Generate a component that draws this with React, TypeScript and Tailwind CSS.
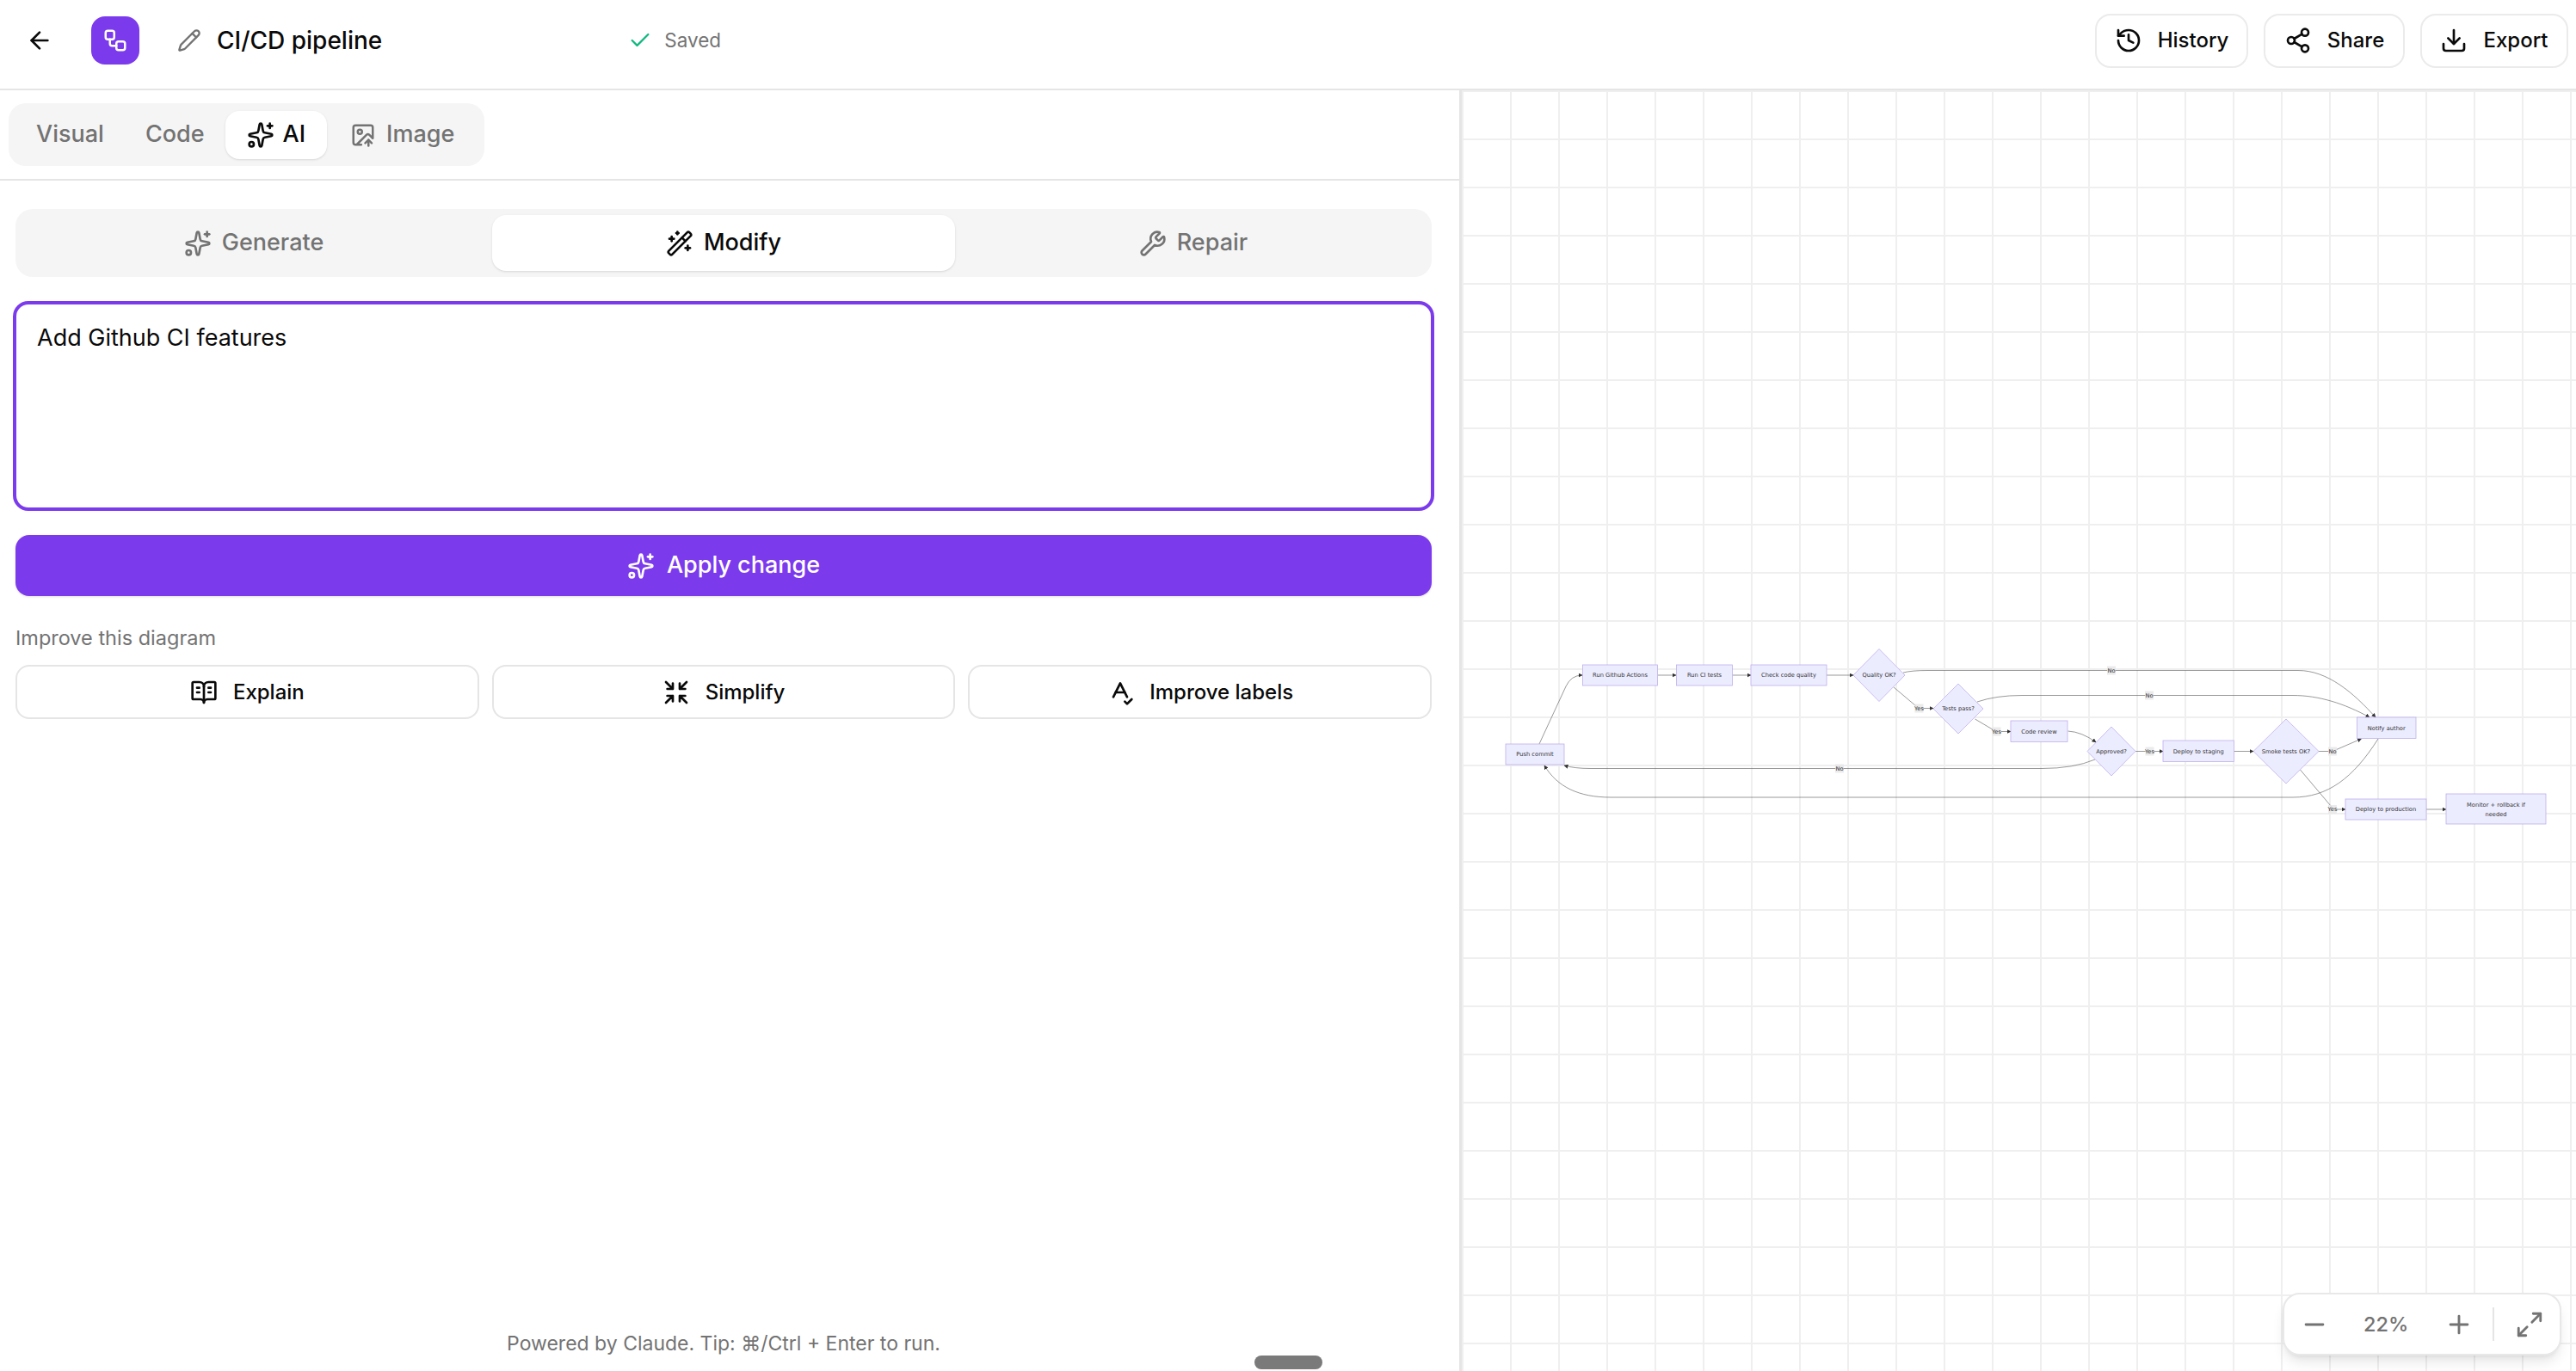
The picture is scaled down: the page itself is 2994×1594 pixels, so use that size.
import React from 'react';
import {
    ArrowLeft,
    BookOpenText,
    Check,
    Download,
    History,
    ImageUp,
    Maximize2,
    Minus,
    Pencil,
    Plus,
    Share2,
    Shrink,
    Sparkles,
    SpellCheck,
    WandSparkles,
    Workflow,
    Wrench,
} from 'lucide-react';

const font = { fontFamily: 'Inter, sans-serif' };

const boxes = [
    { x: 1750, y: 865, w: 68, h: 24, label: 'Push commit' },
    { x: 1839.5, y: 773, w: 87, h: 24, label: 'Run Github Actions' },
    { x: 1948.5, y: 773, w: 65, h: 24, label: 'Run CI tests' },
    { x: 2035, y: 773, w: 88, h: 24, label: 'Check code quality' },
    { x: 2337, y: 838, w: 66, h: 24.5, label: 'Code review' },
    { x: 2514, y: 861, w: 82.5, h: 24.5, label: 'Deploy to staging' },
    { x: 2739.5, y: 834, w: 68.5, h: 24.5, label: 'Notify author' },
    { x: 2726, y: 929, w: 94, h: 24, label: 'Deploy to production' },
];

const diamonds = [
    { cx: 2184, cy: 785, rx: 30, ry: 30.5, label: 'Quality OK?' },
    { cx: 2276, cy: 824, rx: 29, ry: 29, label: 'Tests pass?' },
    { cx: 2454, cy: 873.5, rx: 28, ry: 28.5, label: 'Approved?' },
    { cx: 2657, cy: 873.5, rx: 38, ry: 37.5, label: 'Smoke tests OK?' },
];

const edges = [
    'M1789 865 L1820 798 Q1826 785 1839 785',
    'M1926.5 785 L1948 785',
    'M2013.5 785 L2035 785',
    'M2123 785 L2154 785',
    'M2212 782 Q2222 779.5 2240 779.5 L2671 779.5 C2705 779.5 2735 805 2761 834',
    'M2298 816 Q2320 808.5 2350 808.5 L2665 808.5 C2695 808.5 2725 818 2754 834',
    'M2201 799 L2230 823.5 L2247 823.5',
    'M2295.5 836 L2320 850.5 L2337 850.5',
    'M2403.5 850 Q2420 851 2436 863',
    'M2435 883 Q2410 893.5 2373 893.5 L1849 893.5 Q1830 893.5 1818 890',
    'M2482 873.5 L2514 873.5',
    'M2596.5 873.5 L2619 873.5',
    'M2695 873.5 L2711 873.5 L2744.5 859',
    'M2673.5 895 L2709 937 L2714 941 L2726 941',
    'M2820 941 L2843 941',
    'M2764 859 C2735 905 2705 927 2665 927 L1872 927 C1835 927 1810 915 1795 890',
];

const edgeLabels = [
    { x: 2454, y: 779.5, label: 'No' },
    { x: 2498, y: 808.5, label: 'No' },
    { x: 2138, y: 893.5, label: 'No' },
    { x: 2230.5, y: 823.5, label: 'Yes' },
    { x: 2320.5, y: 850.5, label: 'Yes' },
    { x: 2498.5, y: 873.5, label: 'Yes' },
    { x: 2711, y: 873.5, label: 'No' },
    { x: 2711, y: 941, label: 'Yes' },
];

function Diagram() {
    const text = { fontFamily: '"DejaVu Sans", sans-serif', fontSize: 6.7, fill: '#333' };
    return (
        <svg className="absolute inset-0 h-full w-full" viewBox="1699 105 1295 1489" preserveAspectRatio="xMinYMin slice">
            <defs>
                <marker id="head" markerUnits="userSpaceOnUse" markerWidth="5" markerHeight="5" refX="4.5" refY="2.5" orient="auto">
                    <path d="M0 0 L5 2.5 L0 5 z" fill="#333" />
                </marker>
            </defs>
            {edges.map((d) => (
                <path key={d} d={d} fill="none" stroke="#555" strokeWidth="0.6" markerEnd="url(#head)" />
            ))}
            {edgeLabels.map((l) => (
                <g key={`${l.x}-${l.y}`}>
                    <rect x={l.x - 5} y={l.y - 5} width="10" height="10" fill="#e8e8e8" fillOpacity="0.85" />
                    <text x={l.x} y={l.y + 2.4} textAnchor="middle" style={text}>{l.label}</text>
                </g>
            ))}
            {boxes.map((b) => (
                <g key={b.label}>
                    <rect x={b.x} y={b.y} width={b.w} height={b.h} fill="#ececff" stroke="#bfaeec" strokeWidth="0.8" />
                    <text x={b.x + b.w / 2} y={b.y + b.h / 2 + 2.4} textAnchor="middle" style={text}>{b.label}</text>
                </g>
            ))}
            <g>
                <rect x="2843" y="923" width="116" height="35" fill="#ececff" stroke="#bfaeec" strokeWidth="0.8" />
                <text x="2901" y="938" textAnchor="middle" style={text}>Monitor + rollback if</text>
                <text x="2901" y="949" textAnchor="middle" style={text}>needed</text>
            </g>
            {diamonds.map((n) => (
                <g key={n.label}>
                    <polygon
                        points={`${n.cx - n.rx},${n.cy} ${n.cx},${n.cy - n.ry} ${n.cx + n.rx},${n.cy} ${n.cx},${n.cy + n.ry}`}
                        fill="#ececff"
                        stroke="#bfaeec"
                        strokeWidth="0.8"
                    />
                    <text x={n.cx} y={n.cy + 2.4} textAnchor="middle" style={text}>{n.label}</text>
                </g>
            ))}
        </svg>
    );
}

function HeaderButton({ icon: Icon, label, className }: { icon: typeof History; label: string; className: string }) {
    return (
        <button className={`flex h-[63px] items-center justify-center gap-[18px] rounded-[18px] border-2 border-[#ebebeb] bg-white text-[24px] font-medium text-[#0a0a0a] ${className}`}>
            <Icon size={32} strokeWidth={2} />
            {label}
        </button>
    );
}

function QuickAction({ icon: Icon, label }: { icon: typeof History; label: string }) {
    return (
        <button className="flex h-[63px] flex-1 items-center justify-center gap-[18px] rounded-[16px] border-2 border-[#e5e5e5] bg-white text-[24px] font-medium text-[#0a0a0a]">
            <Icon size={32} strokeWidth={2} />
            {label}
        </button>
    );
}

export default function App() {
    return (
        <div className="relative flex h-[1594px] w-[2994px] flex-col overflow-hidden bg-white text-[#0a0a0a]" style={font}>
            {/* Top bar */}
            <header className="flex h-[105px] shrink-0 items-center border-b-2 border-[#e5e5e5] pb-[9px] pl-[30px] pr-[9px]">
                <ArrowLeft size={32} strokeWidth={2} className="text-[#0a0a0a]" />
                <div className="ml-[44px] flex h-[56px] w-[56px] items-center justify-center rounded-[16px] bg-[#7c3aed]">
                    <Workflow size={30} strokeWidth={2} className="text-white" />
                </div>
                <Pencil size={28} strokeWidth={2} className="ml-[44px] text-[#737373]" />
                <span className="ml-[18px] text-[28px] font-medium">CI/CD pipeline</span>
                <Check size={28} strokeWidth={2} className="ml-[286px] text-[#10b981]" />
                <span className="ml-[14px] text-[22.5px] text-[#737373]">Saved</span>
                <div className="ml-auto flex items-center gap-[18px]">
                    <HeaderButton icon={History} label="History" className="w-[178px]" />
                    <HeaderButton icon={Share2} label="Share" className="w-[164px]" />
                    <HeaderButton icon={Download} label="Export" className="w-[172px]" />
                </div>
            </header>

            <div className="flex min-h-0 flex-1">
                {/* Editor panel */}
                <main className="relative flex w-[1699px] shrink-0 flex-col border-r-[3px] border-[#e5e5e5]">
                    <div className="flex h-[105px] shrink-0 items-center border-b-2 border-[#e5e5e5] pl-[10px]">
                        <div className="flex h-[73px] items-center rounded-[20px] bg-[#f5f5f5] px-[8px] text-[27px] font-medium text-[#737373]">
                            <span className="px-[24px]">Visual</span>
                            <span className="px-[24px]">Code</span>
                            <span className="flex h-[56px] items-center gap-[10px] rounded-[16px] bg-white px-[25px] text-[#0a0a0a] shadow-sm">
                                <Sparkles size={32} strokeWidth={2} />
                                AI
                            </span>
                            <span className="flex items-center gap-[12px] px-[27px]">
                                <ImageUp size={30} strokeWidth={2} />
                                Image
                            </span>
                        </div>
                    </div>

                    <div className="flex flex-1 flex-col pl-[18px] pr-[32px] pt-[33px]">
                        <div className="grid h-[79px] grid-cols-3 items-center gap-[8px] rounded-[20px] bg-[#f5f5f5] px-[8px] text-[27px] font-medium text-[#737373]">
                            <span className="flex items-center justify-center gap-[12px]">
                                <Sparkles size={32} strokeWidth={2} />
                                Generate
                            </span>
                            <span className="flex h-[65px] items-center justify-center gap-[12px] rounded-[16px] bg-white text-[#0a0a0a] shadow-sm">
                                <WandSparkles size={32} strokeWidth={2} />
                                Modify
                            </span>
                            <span className="flex items-center justify-center gap-[12px]">
                                <Wrench size={32} strokeWidth={2} />
                                Repair
                            </span>
                        </div>

                        <textarea
                            readOnly
                            value="Add Github CI features"
                            className="-mx-[3px] mt-[28px] h-[244px] resize-none rounded-[18px] border-[4px] border-[#7c3aed] bg-white px-[24px] py-[19px] text-[27px] leading-[40px] text-[#0a0a0a] outline-none"
                        />

                        <button className="mt-[28px] flex h-[71px] items-center justify-center gap-[14px] rounded-[16px] bg-[#7c3aed] text-[27px] font-medium text-white shadow-sm">
                            <Sparkles size={32} strokeWidth={2} />
                            Apply change
                        </button>

                        <p className="mt-[33px] text-[23.5px] leading-[32px] text-[#737373]">Improve this diagram</p>

                        <div className="mt-[15px] flex gap-[15px]">
                            <QuickAction icon={BookOpenText} label="Explain" />
                            <QuickAction icon={Shrink} label="Simplify" />
                            <QuickAction icon={SpellCheck} label="Improve labels" />
                        </div>
                    </div>

                    <p className="pb-[16px] pr-[14px] text-center text-[23px] leading-[32px] text-[#737373]">
                        Powered by Claude. Tip: ⌘/Ctrl + Enter to run.
                    </p>
                </main>

                {/* Canvas */}
                <section className="relative flex-1 overflow-hidden bg-white bg-[linear-gradient(to_right,#efefef_2px,transparent_2px),linear-gradient(to_bottom,#efefef_2px,transparent_2px)] bg-[size:56px_56px]">
                    <Diagram />
                    <div className="absolute bottom-[18px] right-[17px] flex h-[73px] w-[324px] items-center rounded-[20px] border-2 border-[#e8e8e8] bg-white text-[#737373] shadow-lg">
                        <Minus size={34} strokeWidth={2} className="ml-[18px]" />
                        <span className="ml-[40px] text-[23.5px] font-medium">22%</span>
                        <Plus size={34} strokeWidth={2} className="ml-[42px]" />
                        <div className="ml-[22px] h-[39px] w-[2px] bg-[#e5e5e5]" />
                        <Maximize2 size={34} strokeWidth={2} className="ml-[24px]" />
                    </div>
                </section>
            </div>

            {/* Window drag handle */}
            <div className="absolute bottom-[2px] left-[1458px] h-[16px] w-[79px] rounded-full bg-[#7a7a7a]" />
        </div>
    );
}
